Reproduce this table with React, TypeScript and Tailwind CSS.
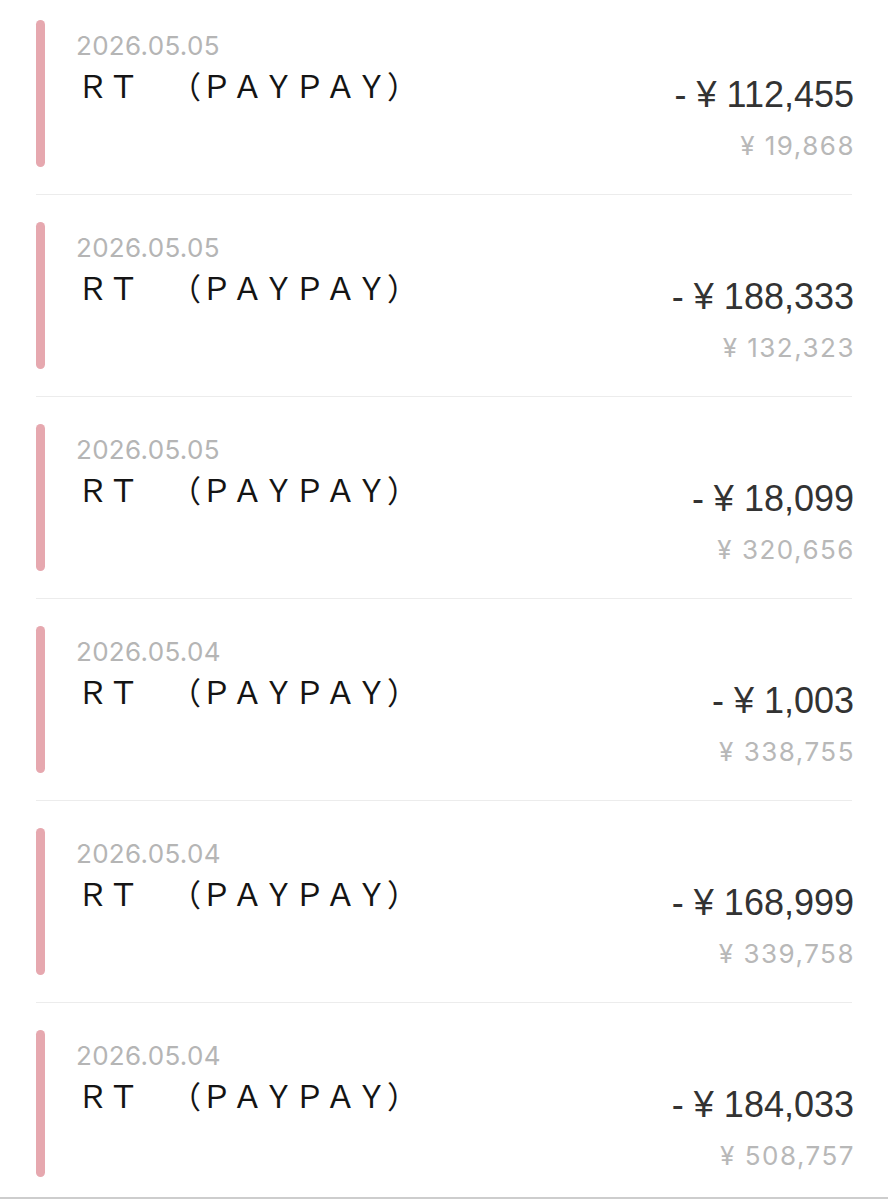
import React from 'react';

type Row = { date: string; amount: string; balance: string };

const rows: Row[] = [
  { date: '2026.05.05', amount: '112,455', balance: '19,868' },
  { date: '2026.05.05', amount: '188,333', balance: '132,323' },
  { date: '2026.05.05', amount: '18,099', balance: '320,656' },
  { date: '2026.05.04', amount: '1,003', balance: '338,755' },
  { date: '2026.05.04', amount: '168,999', balance: '339,758' },
  { date: '2026.05.04', amount: '184,033', balance: '508,757' },
];

const inter = { fontFamily: 'Inter, "Liberation Sans", sans-serif' };
const helv = { fontFamily: '"Liberation Sans", "Noto Sans CJK JP", sans-serif' };
const cjk = { fontFamily: '"Noto Sans CJK JP", "Noto Sans", sans-serif' };

export default function App() {
  return (
    <div className="w-[888px] h-[1200px] bg-white overflow-hidden flex flex-col">
      {/* 取引リスト */}
      <div className="px-[36px] pt-[20px]">
        {rows.map((r, i) => {
          const last = i === rows.length - 1;
          return (
            <div
              key={i}
              className={
                (i === 0 ? '' : 'pt-[27px] ') +
                (last ? 'pb-[20px]' : 'pb-[27px] border-b border-[#ececec]') +
                ' flex'
              }
            >
              <div className="w-[9px] h-[147px] rounded-full bg-[#e6a8af] shrink-0" />
              <div className="flex-1">
                <div
                  className="pl-[31px] pt-[13px] text-[26px] leading-none tracking-[0.3px] text-[#b5b5b5]"
                  style={inter}
                >
                  {r.date}
                </div>
                <div
                  className="pl-[32px] mt-[10px] text-[31px] leading-none text-[#141414] whitespace-nowrap [text-spacing-trim:space-all]"
                  style={cjk}
                >
                  ＲＴ　（ＰＡＹＰＡＹ）
                </div>
              </div>
              <div className="flex flex-col items-end pt-[57px] -mr-[2px]">
                <div className="text-[36px] leading-none text-[#333333]" style={helv}>
                  - ¥ {r.amount}
                </div>
                <div
                  className="mt-[20px] text-[26px] leading-none tracking-[1.5px] text-[#b8b8b8] -mr-[1px]"
                  style={inter}
                >
                  ¥ {r.balance}
                </div>
              </div>
            </div>
          );
        })}
      </div>
      <div className="h-[2px] bg-[#cdcdcd]" />
      <div className="flex-1 bg-white" />
    </div>
  );
}
